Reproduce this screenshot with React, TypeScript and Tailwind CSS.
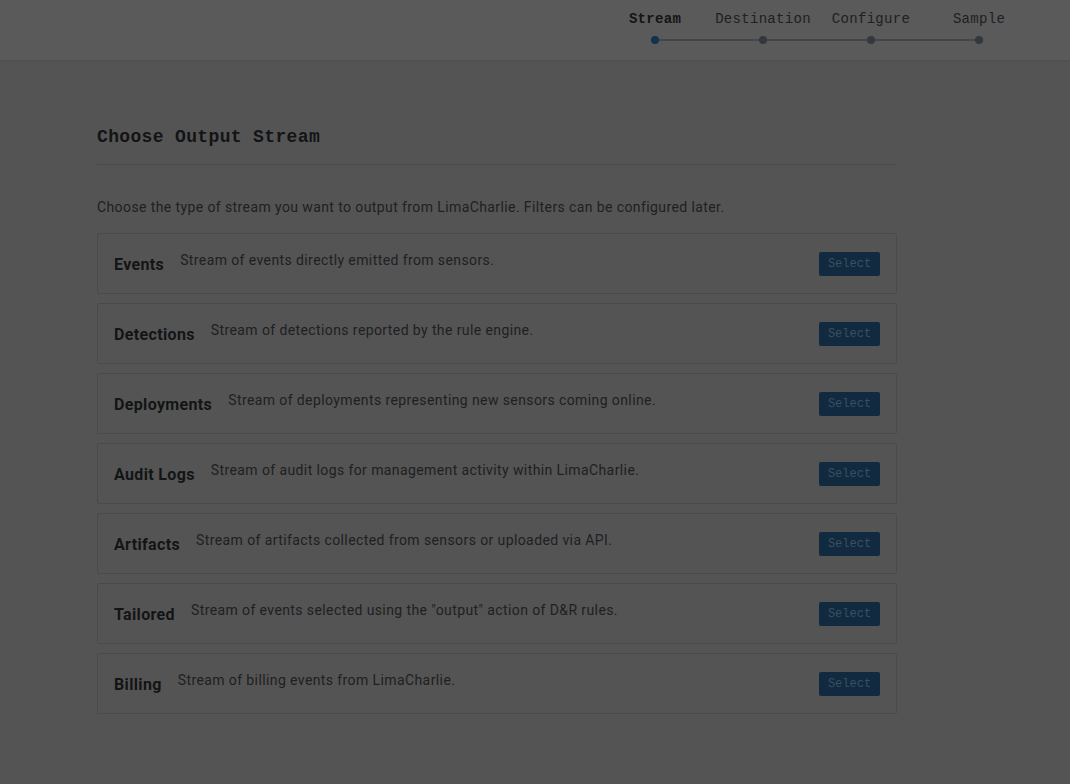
import React from 'react';

const steps = ['Stream', 'Destination', 'Configure', 'Sample'];

const streams = [
  { name: 'Events', desc: 'Stream of events directly emitted from sensors.' },
  { name: 'Detections', desc: 'Stream of detections reported by the rule engine.' },
  { name: 'Deployments', desc: 'Stream of deployments representing new sensors coming online.' },
  { name: 'Audit Logs', desc: 'Stream of audit logs for management activity within LimaCharlie.' },
  { name: 'Artifacts', desc: 'Stream of artifacts collected from sensors or uploaded via API.' },
  { name: 'Tailored', desc: 'Stream of events selected using the "output" action of D&R rules.' },
  { name: 'Billing', desc: 'Stream of billing events from LimaCharlie.' },
];

const mono = "font-['Liberation_Mono','DejaVu_Sans_Mono',monospace]";

const Stepper: React.FC = () => (
  <div className="flex justify-end pr-[37px] pt-[9px]">
    {steps.map((s, i) => (
      <div key={s} className="w-[108px] flex flex-col items-center">
        <div
          className={`${mono} text-[14px] leading-[20px] tracking-[0.3px] ${
            i === 0 ? 'font-bold text-[#131415]' : 'text-[#1e2022]'
          }`}
        >
          {s}
        </div>
        <div className="w-full flex items-center mt-[7px]">
          <div className={`flex-1 h-[2px] ${i === 0 ? 'bg-transparent' : 'bg-[#444546]'}`}></div>
          <div className={`w-[8px] h-[8px] rounded-full ${i === 0 ? 'bg-[#12324e]' : 'bg-[#33383d]'}`}></div>
          <div
            className={`flex-1 h-[2px] ${i === steps.length - 1 ? 'bg-transparent' : 'bg-[#444546]'}`}
          ></div>
        </div>
      </div>
    ))}
  </div>
);

const App: React.FC = () => {
  return (
    <div className="min-h-[784px] bg-[#545454] font-['Roboto','Liberation_Sans',sans-serif]">
      <header className="h-[60px] bg-[#5a5a5a] shadow-[0_1px_3px_rgba(0,0,0,0.06)]">
        <Stepper />
      </header>

      <main className="pl-[97px] pt-[64px]">
        <div className="w-[800px]">
          <h2
            className={`${mono} text-[18px] leading-[27px] font-bold tracking-[0.35px] text-[#131415] pb-[13px] border-b border-[#464b50]`}
          >
            Choose Output Stream
          </h2>
          <p className="mt-[32px] mb-[16px] text-[14px] leading-[20px] tracking-[0.4px] text-[#1e2022]">
            Choose the type of stream you want to output from LimaCharlie. Filters can be configured later.
          </p>

          {streams.map((s) => (
            <div
              key={s.name}
              className="h-[61px] mb-[9px] border border-[#464b50] rounded-[2px] flex items-center justify-between px-[16px]"
            >
              <div className="flex items-start pb-[3px]">
                <span className="text-[16px] leading-[20px] font-bold tracking-[0.35px] text-[#131415] mt-[5px]">
                  {s.name}
                </span>
                <span className="ml-[16px] text-[14px] leading-[20px] tracking-[0.4px] text-[#1e2022]">
                  {s.desc}
                </span>
              </div>
              <button
                className={`${mono} h-[24px] w-[61px] rounded-[2px] bg-[#112a40] text-[#3c4f5f] text-[12px] leading-[24px]`}
              >
                Select
              </button>
            </div>
          ))}
        </div>
      </main>
    </div>
  );
};

export default App;
